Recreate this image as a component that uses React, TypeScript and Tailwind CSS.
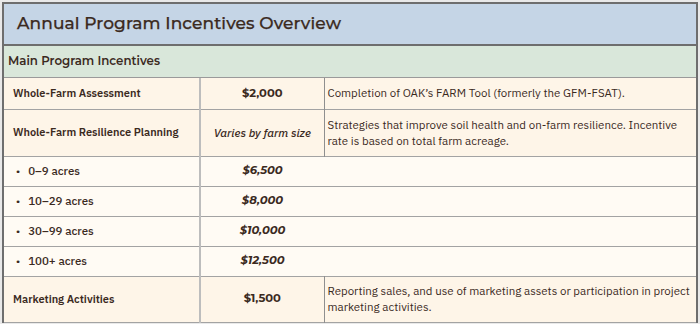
const rows = [
  { label: 'Whole-Farm Assessment', amount: '$2,000', desc: "Completion of OAK’s FARM Tool (formerly the GFM-FSAT).", h: 'h-[31px]', kind: 'main' },
  { label: 'Whole-Farm Resilience Planning', amount: 'Varies by farm size', desc: 'Strategies that improve soil health and on-farm resilience. Incentive rate is based on total farm acreage.', h: 'h-[47px]', kind: 'varies' },
  { label: '0–9 acres', amount: '$6,500', kind: 'tier' },
  { label: '10–29 acres', amount: '$8,000', kind: 'tier' },
  { label: '30–99 acres', amount: '$10,000', kind: 'tier' },
  { label: '100+ acres', amount: '$12,500', kind: 'tier' },
  { label: 'Marketing Activities', amount: '$1,500', desc: 'Reporting sales, and use of marketing assets or participation in project marketing activities.', h: 'h-[46px]', kind: 'main' },
];

export default function App() {
  return (
    <div className="w-[700px] h-[324px] bg-[#e9e9e9] pt-[2px] pl-[2px] pr-[2px] overflow-hidden">
      <div className="border-2 border-[#6e6e6e] border-b-0 text-[#3b2a1e] font-['IBM_Plex_Sans','Noto_Sans',sans-serif]">
        {/* Title */}
        <div className="h-[42px] bg-[#c5d5e6] border-b-2 border-[#6e6e6e] flex items-center pl-[13px]">
          <h1 className="text-[17px] font-medium tracking-[0.1px] [-webkit-text-stroke:0.25px_#3b2a1e] font-['Montserrat','Noto_Sans',sans-serif]">Annual Program Incentives Overview</h1>
        </div>
        {/* Section */}
        <div className="h-[32px] bg-[#d9e7da] border-b border-[#9a9a9a] flex items-center pl-[4px] pt-[1px]">
          <span className="text-[11.8px] font-semibold font-['Montserrat','Noto_Sans',sans-serif]">Main Program Incentives</span>
        </div>
        <table className="w-full border-collapse table-fixed">
          <colgroup>
            <col className="w-[196px]" />
            <col className="w-[124px]" />
            <col />
          </colgroup>
          <tbody>
            {rows.map((r) => {
              const tier = r.kind === 'tier';
              return (
                <tr key={r.label} className={`${tier ? 'bg-[#fffbf4] h-[30px]' : `bg-[#fef5e8] ${r.h}`} border-b border-[#a3a3a3]`}>
                  <td className="border-r-2 border-[#bdbdbd] p-0 pl-[9px] text-[11px] font-semibold">
                    {tier ? (
                      <span className="pl-[3px] text-[11.5px] font-medium">
                        <span className="mr-[8px] text-[10px]">•</span>
                        {r.label}
                      </span>
                    ) : (
                      r.label
                    )}
                  </td>
                  <td className={`p-0 text-center text-[11.5px] ${tier ? 'italic font-bold font-["Montserrat","Noto_Sans",sans-serif]' : r.kind === 'varies' ? 'italic font-medium' : 'font-bold font-["Montserrat","Noto_Sans",sans-serif]'} ${tier ? '' : 'border-r border-[#8f8f8f]'}`}>
                    {r.amount}
                  </td>
                  <td className="p-0 pl-[3px] pr-[1px] text-[11.5px] leading-[16px]">
                    {r.desc ?? ''}
                  </td>
                </tr>
              );
            })}
          </tbody>
        </table>
      </div>
    </div>
  );
}
